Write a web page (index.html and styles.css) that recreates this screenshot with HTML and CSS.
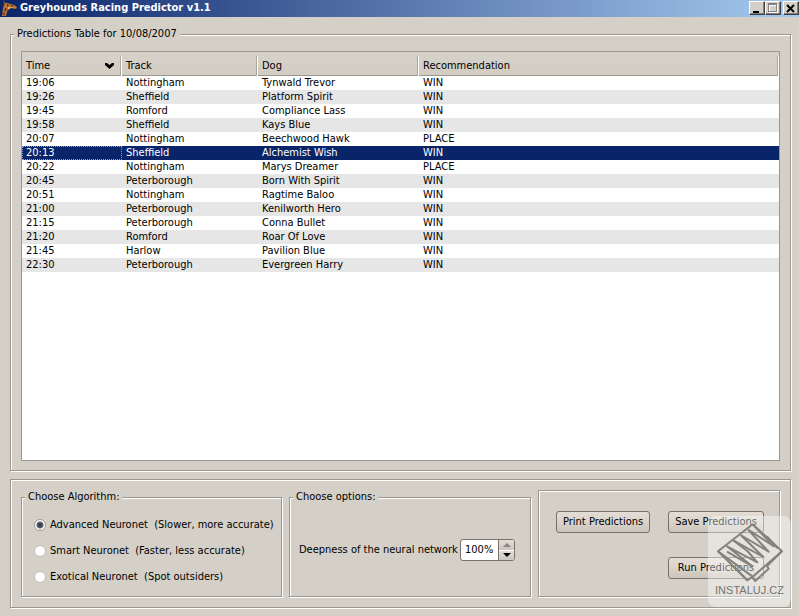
FILE: index.html
```html
<!DOCTYPE html>
<html lang="en">
<head>
    <meta charset="UTF-8">
    <title>Greyhounds Racing Predictor v1.1</title>
    <link rel="stylesheet" href="styles.css">
</head>
<body>
<header class="titlebar">
    <svg class="app-icon" viewBox="0 0 16 16" width="16" height="16">
        <path d="M1 0l2 3 2 0 4 1 5 2 1 2-2 1-4-1-3 1-2 7H0L1 8 2 5z" fill="#b87333"/>
        <path d="M1 1l2 3-2 2zM5 4l2 1-2 2zM3 8l2 1-3 3zM9 5l2 1-2 1zM1 13l2 0-1 3z" fill="#4a2a1a"/>
        <path d="M6 7l3 0 4 1-4 0-3 2z" fill="#e0a870"/>
    </svg>
    <h1>Greyhounds Racing Predictor v1.1</h1>
    <div class="win-buttons">
        <button type="button" aria-label="Minimize">
            <svg viewBox="0 0 12 11" width="12" height="11"><path d="M2 8h6v2H2z"/></svg>
        </button>
        <button type="button" aria-label="Maximize" disabled>
            <svg viewBox="0 0 12 11" width="12" height="11">
                <path d="M2 1h9v9H2zM3 3v6h7V3z" fill="#fff" fill-rule="evenodd"/>
                <path d="M1 0h9v9H1zM2 2v6h7V2z" fill="#808080" fill-rule="evenodd"/>
            </svg>
        </button>
        <button type="button" class="close" aria-label="Close">
            <svg viewBox="0 0 12 11" width="12" height="11"><path d="M2 2l7 7M9 2l-7 7" stroke="#000" stroke-width="2"/></svg>
        </button>
    </div>
</header>

<main>
    <fieldset class="group predictions">
        <legend>Predictions Table for 10/08/2007</legend>
        <div class="table-box">
            <table>
                <colgroup>
                    <col class="c-time"><col class="c-track"><col class="c-dog"><col>
                </colgroup>
                <thead>
                <tr>
                    <th><div class="sorted">Time
                        <svg viewBox="0 0 9 6" width="9" height="6"><path d="M0 0h2l2.500 2L7 0h2v2L4.500 6 0 2z"/></svg>
                    </div></th>
                    <th><div>Track</div></th>
                    <th><div>Dog</div></th>
                    <th><div>Recommendation</div></th>
                </tr>
                </thead>
                <tbody>
                <tr><td>19:06</td><td>Nottingham</td><td>Tynwald Trevor</td><td>WIN</td></tr>
                <tr><td>19:26</td><td>Sheffield</td><td>Platform Spirit</td><td>WIN</td></tr>
                <tr><td>19:45</td><td>Romford</td><td>Compliance Lass</td><td>WIN</td></tr>
                <tr><td>19:58</td><td>Sheffield</td><td>Kays Blue</td><td>WIN</td></tr>
                <tr><td>20:07</td><td>Nottingham</td><td>Beechwood Hawk</td><td>PLACE</td></tr>
                <tr class="selected"><td>20:13</td><td>Sheffield</td><td>Alchemist Wish</td><td>WIN</td></tr>
                <tr><td>20:22</td><td>Nottingham</td><td>Marys Dreamer</td><td>PLACE</td></tr>
                <tr><td>20:45</td><td>Peterborough</td><td>Born With Spirit</td><td>WIN</td></tr>
                <tr><td>20:51</td><td>Nottingham</td><td>Ragtime Baloo</td><td>WIN</td></tr>
                <tr><td>21:00</td><td>Peterborough</td><td>Kenilworth Hero</td><td>WIN</td></tr>
                <tr><td>21:15</td><td>Peterborough</td><td>Conna Bullet</td><td>WIN</td></tr>
                <tr><td>21:20</td><td>Romford</td><td>Roar Of Love</td><td>WIN</td></tr>
                <tr><td>21:45</td><td>Harlow</td><td>Pavilion Blue</td><td>WIN</td></tr>
                <tr><td>22:30</td><td>Peterborough</td><td>Evergreen Harry</td><td>WIN</td></tr>
                </tbody>
            </table>
        </div>
    </fieldset>

    <section class="group controls">
        <fieldset class="group algorithm">
            <legend>Choose Algorithm:</legend>
            <label><input type="radio" name="algorithm" checked>Advanced Neuronet&nbsp; (Slower, more accurate)</label>
            <label><input type="radio" name="algorithm">Smart Neuronet&nbsp; (Faster, less accurate)</label>
            <label><input type="radio" name="algorithm">Exotical Neuronet&nbsp; (Spot outsiders)</label>
        </fieldset>
        <fieldset class="group options">
            <legend>Choose options:</legend>
            <div class="option-row">
                <label for="deepness">Deepness of the neural network</label>
                <div class="spinner">
                    <input type="text" id="deepness" value="100%">
                    <div class="arrows">
                        <button type="button" aria-label="Increase" disabled>
                            <svg viewBox="0 0 8 4" width="8" height="4"><path d="M4 0l4 4H0z" fill="#8a867f"/></svg>
                        </button>
                        <button type="button" aria-label="Decrease">
                            <svg viewBox="0 0 8 4" width="8" height="4"><path d="M0 0h8L4 4z"/></svg>
                        </button>
                    </div>
                </div>
            </div>
        </fieldset>
        <div class="group actions">
            <button type="button" class="btn">Print Predictions</button>
            <button type="button" class="btn">Save Predictions</button>
            <button type="button" class="btn run">Run Predictions</button>
        </div>
    </section>
</main>

<div class="watermark">
    <svg viewBox="0 0 198 180" width="66" height="60" fill="none" stroke="#85827d" stroke-width="6" stroke-linejoin="round">
        <path d="M107 4L3 85l88 87 14-10 10 12 40-37-5-8 45-44z"/>
        <path d="M3 85l104 76 88-76"/>
        <path d="M107 4l64 66-78-50M93 20l62 66-84-50M71 36l68 66-90-50"/>
        <path d="M49 52l42 32 30 34-91-48 76 60-76-44M150 40l32 36M91 172l-40-40"/>
    </svg>
    <span>INSTALUJ.CZ</span>
</div>
</body>
</html>
```
FILE: styles.css
```css
*{
    box-sizing: border-box;
}
body{
    margin: 0;
    min-height: 100vh;
    display: flex;
    flex-direction: column;
    background: #d4d0c8;
    color: #000;
    font-family: Tahoma, "DejaVu Sans Condensed", "DejaVu Sans", sans-serif;
    font-size: 11px;
    line-height: 14px;
}
button, input{
    font: inherit;
    color: inherit;
    margin: 0;
}
svg{
    display: block;
}

/* title bar */
.titlebar{
    display: flex;
    align-items: center;
    height: 17px;
    padding: 0 0 1px 2px;
    background: linear-gradient(90deg, #0a246a, #a6caf0);
}
.app-icon{
    margin-right: 2px;
}
.titlebar h1{
    flex: 1;
    margin: 0;
    color: #fff;
    font-size: 11px;
    font-weight: bold;
}
.win-buttons{
    display: flex;
}
.win-buttons button{
    width: 16px;
    height: 14px;
    padding: 0 1px;
    background: #d4d0c8;
    border: 1px solid;
    border-color: #fff #404040 #404040 #fff;
    box-shadow: inset -1px -1px 0 #808080;
}
.win-buttons .close{
    margin-left: 2px;
}

main{
    flex: 1;
    display: grid;
    grid-template-rows: 1fr auto;
    gap: 8px;
    padding: 10px 8px 8px 10px;
}

/* etched frames */
.group{
    min-width: 0;
    margin: 0;
    padding: 0;
    border: 1px solid #9b978f;
    box-shadow: 1px 1px 0 #fff, inset 1px 1px 0 #fff;
}
.group legend{
    margin-left: 3px;
    padding: 0 3px;
    background: #d4d0c8;
}

/* predictions table */
.predictions{
    display: flex;
}
.table-box{
    flex: 1;
    margin: 10px 10px 9px;
    border: 1px solid #9b978f;
    background: #fff;
}
table{
    width: 100%;
    table-layout: fixed;
    border-collapse: collapse;
}
.c-time{
    width: 100px;
}
.c-track{
    width: 136px;
}
.c-dog{
    width: 161px;
}
th{
    height: 24px;
    padding: 3px 0 0;
    background: linear-gradient(#d6d2ca, #d2ccc3);
    box-shadow: inset 0 -1px 0 #9b978f;
    font-weight: normal;
    text-align: left;
}
th div{
    height: 20px;
    padding: 0 4px;
    line-height: 20px;
    border-right: 1px solid #fff;
    box-shadow: inset -1px 0 0 #aaa69e;
}
.sorted{
    display: flex;
    align-items: center;
    justify-content: space-between;
    padding-right: 7px;
}
td{
    height: 14px;
    padding: 0 4px;
    line-height: 14px;
}
tbody tr:nth-child(even){
    background: #e6e6e6;
}
tbody tr.selected{
    background: #0a246a;
    color: #fff;
}
.selected td:first-child{
    outline: 1px dotted #8c9cc4;
    outline-offset: -1px;
}

/* bottom panel */
.controls{
    display: grid;
    grid-template-columns: 261fr 242fr 242fr;
    gap: 7px;
    padding: 10px;
}
.algorithm label{
    display: flex;
    align-items: center;
    height: 26px;
    margin-left: 12px;
    white-space: nowrap;
}
.algorithm{
    padding: 8px 0 6px;
}
input[type="radio"]{
    appearance: none;
    width: 12px;
    height: 12px;
    margin-right: 4px;
    border: 1px solid #c0bcb4;
    border-radius: 50%;
    background: #fff;
}
input[type="radio"]:checked{
    border-color: #a09c95;
    background: radial-gradient(circle, #29323c 0, #566270 3px, #fff 4px);
}
.options{
    display: flex;
    align-items: center;
}
.option-row{
    flex: 1;
    display: flex;
    align-items: center;
    justify-content: space-between;
    margin: 0 15px 0 9px;
    white-space: nowrap;
}
.spinner{
    display: flex;
    width: 55px;
    height: 22px;
    border: 1px solid #77736c;
    border-radius: 3px;
    background: #fff;
    overflow: hidden;
}
.spinner input{
    flex: 1;
    min-width: 0;
    padding: 0 0 0 4px;
    border: 0;
    background: none;
}
.arrows{
    display: flex;
    flex-direction: column;
    width: 16px;
    border-left: 1px solid #77736c;
}
.arrows button{
    flex: 1;
    display: flex;
    align-items: center;
    justify-content: center;
    padding: 0;
    border: 0;
    background: linear-gradient(#e2ded7, #ccc6bd);
}
.arrows button + button{
    border-top: 1px solid #fff;
}
.actions{
    display: grid;
    grid-template-columns: auto auto;
    justify-content: space-between;
    align-content: start;
    gap: 24px 18px;
    padding: 20px 16px 0 17px;
}
.btn{
    height: 22px;
    padding: 0 6px;
    border: 1px solid #77716a;
    border-radius: 3px;
    background: linear-gradient(#e3ddd5, #d9d3ca 50%, #cbc4ba);
    white-space: nowrap;
}
.run{
    grid-column: 2;
}

/* watermark lies over the corner of the panel */
.watermark{
    position: absolute;
    right: 8px;
    bottom: 9px;
    display: flex;
    flex-direction: column;
    align-items: center;
    width: 83px;
    height: 91px;
    padding-top: 7px;
    border-radius: 8px;
    background: rgba(255, 255, 255, 0.4);
    color: #77746f;
    font-family: "Liberation Sans", Arial, sans-serif;
    font-size: 11px;
    pointer-events: none;
}
```
